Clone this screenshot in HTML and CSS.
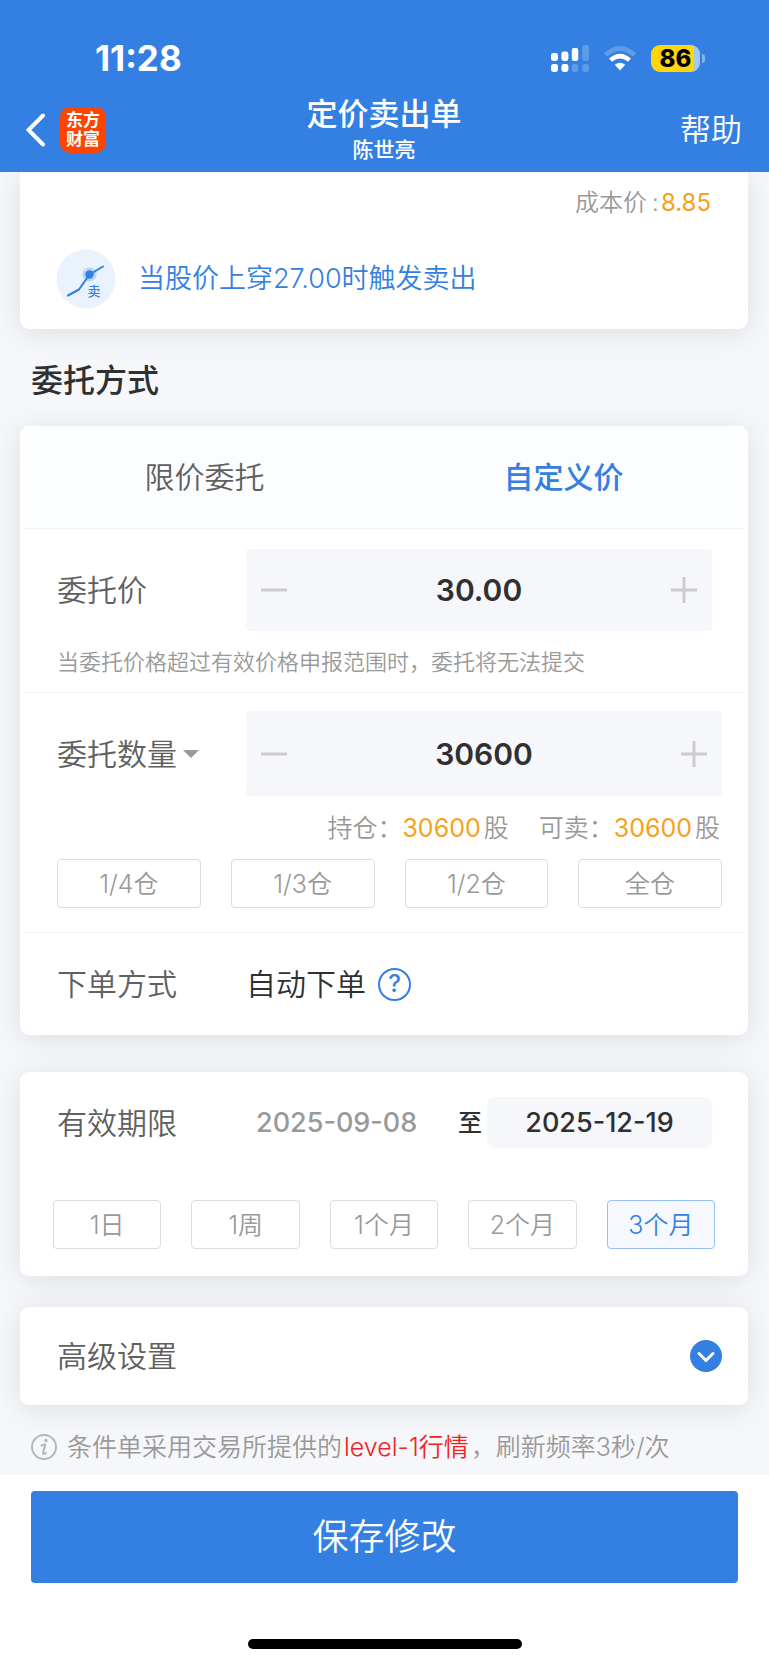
FILE: index.html
```html
<!DOCTYPE html>
<html lang="zh-CN">
<head>
<meta charset="utf-8">
<meta name="viewport" content="width=device-width, initial-scale=1">
<title>定价卖出单</title>
<link rel="stylesheet" href="styles.css">
</head>
<body>
<header class="header">
  <div class="status">
    <span class="status-time">11:28</span>
    <div class="status-icons">
      <svg width="38" height="27" viewBox="0 0 38 27" fill="#fff" aria-hidden="true">
        <rect x="0" y="8" width="7" height="8" rx="2.4"/>
        <rect x="10.400" y="6.500" width="7" height="9.500" rx="2.400"/>
        <rect x="20.800" y="3" width="6.500" height="13" rx="2.200"/>
        <rect x="31.200" y="0" width="6.800" height="16" rx="2.400" opacity=".22"/>
        <rect x="0" y="19" width="7" height="8" rx="2.400"/>
        <rect x="10.400" y="19" width="7" height="8" rx="2.400"/>
        <rect x="20.800" y="19" width="6.500" height="8" rx="2.400" opacity=".22"/>
        <rect x="31.200" y="19" width="6.800" height="8" rx="2.400" opacity=".22"/>
      </svg>
      <svg width="34" height="25" viewBox="0 0 34 25" aria-hidden="true">
        <path d="M2.500 8.500Q17-4.500 31.500 8.500" transform="translate(0 .5)" fill="none" stroke="#fff" stroke-width="4.800" opacity=".22"/>
        <path d="M7.500 14.200Q17 6 26.500 14.200" fill="none" stroke="#fff" stroke-width="4.400"/>
        <path d="M11.800 18.800Q17 14.600 22.200 18.800L17 24.500Z" fill="#fff"/>
      </svg>
      <span class="battery">
        <span class="battery-level">86</span>
      </span>
    </div>
  </div>
  <nav class="nav">
    <div class="nav-left">
      <button class="back" type="button" aria-label="返回">
        <svg width="20" height="34" viewBox="0 0 20 34" fill="none" stroke="#fff" stroke-width="4" stroke-linecap="round" aria-hidden="true"><path d="M17 2.500 2.500 17 17 31.500"/></svg>
      </button>
      <span class="brand"><span>东方</span><span>财富</span></span>
    </div>
    <div class="nav-title">
      <h1>定价卖出单</h1>
      <p>陈世亮</p>
    </div>
    <a class="nav-help" href="#help">帮助</a>
  </nav>
</header>

<main class="main">
  <section class="card card-top">
    <p class="cost">成本价<span class="colon">:</span><span class="amber">8.85</span></p>
    <div class="trigger">
      <svg width="60" height="60" viewBox="0 0 60 60" aria-hidden="true">
        <circle cx="30" cy="30" r="29.500" fill="#e9f2fd"/>
        <path d="M12 46.500 23 40.500 33.500 25.500 47 17.500" fill="none" stroke="#3380e2" stroke-width="2" stroke-linecap="round" stroke-linejoin="round"/>
        <circle cx="33.500" cy="25.500" r="7" fill="#3380e2" opacity=".25"/>
        <circle cx="33.500" cy="25.500" r="4.200" fill="#3380e2"/>
        <text x="31.500" y="46.500" class="trigger-glyph">卖</text>
      </svg>
      <p>当股价上穿27.00时触发卖出</p>
    </div>
  </section>

  <h2 class="section-title">委托方式</h2>

  <section class="card">
    <div class="tabs" role="tablist">
      <button class="tab" type="button" role="tab" aria-selected="false">限价委托</button>
      <button class="tab tab-active" type="button" role="tab" aria-selected="true">自定义价</button>
    </div>

    <div class="block block-price">
      <div class="field">
        <label class="label" for="price">委托价</label>
        <div class="stepper">
          <button class="step" type="button" aria-label="减少价格"><svg width="26" height="26" viewBox="0 0 26 26" aria-hidden="true"><path d="M0 13h26"/></svg></button>
          <input class="step-value" id="price" type="text" value="30.00">
          <button class="step" type="button" aria-label="增加价格"><svg width="26" height="26" viewBox="0 0 26 26" aria-hidden="true"><path d="M0 13h26M13 0v26"/></svg></button>
        </div>
      </div>
      <p class="hint">当委托价格超过有效价格申报范围时，委托将无法提交</p>
    </div>

    <div class="block block-amount">
      <div class="field">
        <div class="label picker">
          <select aria-label="委托方式"><option>委托数量</option></select>
          <svg width="16" height="8" viewBox="0 0 16 8" aria-hidden="true"><path d="M0 0h16L8 8Z" fill="#999"/></svg>
        </div>
        <div class="stepper stepper-tall">
          <button class="step" type="button" aria-label="减少数量"><svg width="26" height="26" viewBox="0 0 26 26" aria-hidden="true"><path d="M0 13h26"/></svg></button>
          <input class="step-value" type="text" value="30600" aria-label="委托数量">
          <button class="step" type="button" aria-label="增加数量"><svg width="26" height="26" viewBox="0 0 26 26" aria-hidden="true"><path d="M0 13h26M13 0v26"/></svg></button>
        </div>
      </div>
      <div class="holdings">
        <span>持仓：<span class="amber">30600</span>股</span>
        <span>可卖：<span class="amber">30600</span>股</span>
      </div>
      <div class="chips">
        <button class="chip" type="button">1/4仓</button>
        <button class="chip" type="button">1/3仓</button>
        <button class="chip" type="button">1/2仓</button>
        <button class="chip" type="button">全仓</button>
      </div>
    </div>

    <div class="block block-mode">
      <span class="label">下单方式</span>
      <span class="mode-value">自动下单</span>
      <button class="help" type="button" aria-label="说明">?</button>
    </div>
  </section>

  <section class="card card-period">
    <div class="period">
      <span class="label">有效期限</span>
      <span class="date-from">2025-09-08</span>
      <label class="date-to" for="until">至</label>
      <input class="date-input" id="until" type="text" value="2025-12-19">
    </div>
    <div class="chips">
      <button class="chip" type="button">1日</button>
      <button class="chip" type="button">1周</button>
      <button class="chip" type="button">1个月</button>
      <button class="chip" type="button">2个月</button>
      <button class="chip chip-active" type="button">3个月</button>
    </div>
  </section>

  <button class="card card-more" type="button">
    <span>高级设置</span>
    <svg width="32" height="32" viewBox="0 0 32 32" aria-hidden="true"><circle cx="16" cy="16" r="16" fill="#3380e2"/><path d="M9 13.500 16 20.500 23 13.500" fill="none" stroke="#fff" stroke-width="3" stroke-linecap="round" stroke-linejoin="round"/></svg>
  </button>

  <p class="note">
    <svg width="26" height="26" viewBox="0 0 26 26" aria-hidden="true"><circle cx="13" cy="13" r="12" fill="none" stroke="#b4b7be" stroke-width="2"/><circle cx="15" cy="6.500" r="1.700" fill="#b4b7be"/><path d="M10.500 11.500Q13 10.500 14.300 10.500L12 19Q11.800 20.500 14.800 19" fill="none" stroke="#b4b7be" stroke-width="2" stroke-linecap="round" stroke-linejoin="round"/></svg>
    <span>条件单采用交易所提供的<em>level-1行情</em>，刷新频率3秒/次</span>
  </p>
</main>

<footer class="footer">
  <button class="save" type="button">保存修改</button>
  <div class="home-bar"></div>
</footer>
</body>
</html>
```

FILE: styles.css
```css
:root {
  --blue: #3380e2;
  --text: #303030;
  --label: #606060;
  --muted: #999;
  --amber: #f7a120;
  --page: #f6f7fa;
}

* {
  box-sizing: border-box;
}

body,
h1,
h2,
p {
  margin: 0;
}

body {
  display: flex;
  flex-direction: column;
  min-height: 100vh;
  background: #fff;
  color: var(--text);
  font-family: Inter, "Noto Sans CJK SC", sans-serif;
  font-size: 30px;
  line-height: 40px;
  font-weight: 350;
}

button,
input,
select {
  margin: 0;
  padding: 0;
  border: 0;
  border-radius: 0;
  background: none;
  color: inherit;
  font: inherit;
}

/* Header */
.header {
  position: relative;
  z-index: 1;
  padding-top: 38px;
  background: var(--blue);
  color: #fff;
}

.status {
  display: flex;
  align-items: center;
  justify-content: space-between;
  padding: 0 64px 0 95px;
}

.status-time {
  font-size: 35px;
  font-weight: 700;
}

.status-icons {
  display: flex;
  align-items: center;
  gap: 14px;
}

.battery {
  position: relative;
  width: 49px;
  height: 27px;
  margin-right: 5px;
  border-radius: 9px;
  background: linear-gradient(to right, #ffd60a 43px, #a5c6f2 43px);
}

.battery::after {
  content: "";
  position: absolute;
  top: 9px;
  left: 51px;
  width: 3px;
  height: 9px;
  border-radius: 0 4px 4px 0;
  background: #85b3ee;
}

.battery-level {
  display: block;
  color: #000;
  font-size: 24px;
  font-weight: 800;
  line-height: 27px;
  text-align: center;
}

.nav {
  display: grid;
  grid-template-columns: 1fr auto 1fr;
  align-items: center;
  height: 94px;
  padding: 10px 27px 0 26px;
}

.nav-left {
  display: flex;
  align-items: center;
  gap: 14px;
}

.back {
  display: flex;
}

.brand {
  display: flex;
  flex-direction: column;
  align-items: center;
  justify-content: center;
  width: 46px;
  height: 46px;
  border-radius: 10px;
  background: #ff4400;
  font-size: 17px;
  font-weight: 700;
  line-height: 19px;
}

.nav-title {
  text-align: center;
}

.nav-title h1 {
  font-size: 31px;
  font-weight: 500;
  line-height: 40px;
}

.nav-title p {
  font-size: 21px;
  font-weight: 500;
  line-height: 32px;
}

.nav-help {
  justify-self: end;
  color: inherit;
  font-size: 31px;
  text-decoration: none;
}

/* Cards */
.main {
  padding: 0 21px 8px 20px;
  background: var(--page);
}

.card {
  margin-bottom: 37px;
  border-radius: 9px;
  background: #fff;
  box-shadow: 0 4px 30px rgba(0, 0, 0, .1);
}

.card-top {
  margin-bottom: 0;
  padding: 15px 37px 20px 36px;
  border-radius: 0 0 9px 9px;
}

.cost {
  color: var(--muted);
  font-size: 24px;
  line-height: 32px;
  text-align: right;
}

.colon {
  margin: 0 2px 0 5px;
}

.amber {
  color: var(--amber);
  font-weight: 400;
}

.trigger {
  display: flex;
  align-items: center;
  gap: 22px;
  padding-top: 30px;
  color: var(--blue);
  font-size: 27px;
}

.trigger-glyph {
  fill: var(--blue);
  font-size: 13px;
  font-weight: 500;
}

.section-title {
  padding: 29px 11px 22px;
  font-size: 32px;
  font-weight: 500;
  line-height: 46px;
}

.tabs {
  display: flex;
  height: 103px;
  margin: 0 5px;
  border-bottom: 1px solid #f1f2f4;
  background: #fcfdff;
}

.tab {
  flex: 1;
  color: var(--label);
}

.tab-active {
  color: var(--blue);
  font-weight: 500;
}

.block {
  margin: 0 5px;
  padding: 0 21px 0 32px;
}

.block + .block {
  border-top: 1px solid #f1f2f4;
}

.field {
  display: flex;
  align-items: center;
}

.label {
  flex: none;
  width: 189px;
  color: var(--label);
}

.block-price {
  padding-top: 20px;
  padding-bottom: 14px;
}

.block-price .field {
  padding-right: 10px;
}

.hint {
  padding-top: 15px;
  color: var(--muted);
  font-size: 22px;
  line-height: 32px;
}

.stepper {
  display: flex;
  flex: 1;
  min-width: 0;
  height: 82px;
  border-radius: 4px;
  background: var(--page);
}

.stepper-tall {
  height: 85px;
}

.step {
  display: flex;
  align-items: center;
  padding: 0 15px;
}

.step path {
  fill: none;
  stroke: #ccc;
  stroke-width: 3;
}

.step-value {
  flex: 1;
  min-width: 0;
  font-weight: 600;
  text-align: center;
}

.block-amount {
  padding-top: 18px;
  padding-bottom: 24px;
}

.picker {
  display: flex;
  align-items: center;
  gap: 6px;
}

.picker select {
  appearance: none;
}

.holdings {
  display: flex;
  justify-content: flex-end;
  gap: 30px;
  padding: 16px 2px 15px 0;
  color: var(--muted);
  font-size: 25px;
  line-height: 32px;
}

.holdings .amber {
  margin-right: 3px;
}

.chips {
  display: flex;
  gap: 30px;
}

.chip {
  flex: 1;
  height: 49px;
  border: 1px solid #ddd;
  border-radius: 4px;
  color: var(--muted);
  font-size: 25px;
}

.chip-active {
  border-color: #99c0f2;
  background: #f5f9ff;
  color: var(--blue);
}

.block-mode {
  display: flex;
  align-items: center;
  height: 103px;
}

.mode-value {
  padding-right: 12px;
}

.help {
  width: 33px;
  height: 33px;
  border: 2px solid var(--blue);
  border-radius: 50%;
  color: var(--blue);
  font-size: 24px;
  font-weight: 500;
  line-height: 28px;
}

.card-period {
  margin-bottom: 31px;
  padding: 25px 33px 27px;
}

.period {
  display: flex;
  align-items: center;
  padding: 0 3px 52px 4px;
}

.date-from {
  flex: 1;
  padding-left: 10px;
  color: var(--muted);
  font-size: 27px;
  font-weight: 500;
}

.date-to {
  padding: 0 5px;
  font-size: 24px;
  font-weight: 500;
}

.date-input {
  width: 225px;
  height: 51px;
  border-radius: 8px;
  background: var(--page);
  font-size: 27px;
  font-weight: 500;
  text-align: center;
}

.card-more {
  display: flex;
  align-items: center;
  justify-content: space-between;
  width: 100%;
  height: 98px;
  margin-bottom: 22px;
  padding: 0 26px 0 37px;
  color: var(--label);
}

.note {
  display: flex;
  align-items: center;
  gap: 10px;
  padding: 0 11px;
  color: var(--muted);
  font-size: 25px;
}

.note em {
  margin: 0 2px;
  color: #f52020;
  font-style: normal;
}

/* Footer */
.footer {
  display: flex;
  flex-direction: column;
  align-items: center;
  padding: 16px 31px 0;
}

.save {
  width: 100%;
  height: 92px;
  border-radius: 4px;
  background: var(--blue);
  color: #fff;
  font-size: 36px;
}

.home-bar {
  width: 274px;
  height: 10px;
  margin: 56px 0 14px;
  border-radius: 5px;
  background: #000;
}
```
